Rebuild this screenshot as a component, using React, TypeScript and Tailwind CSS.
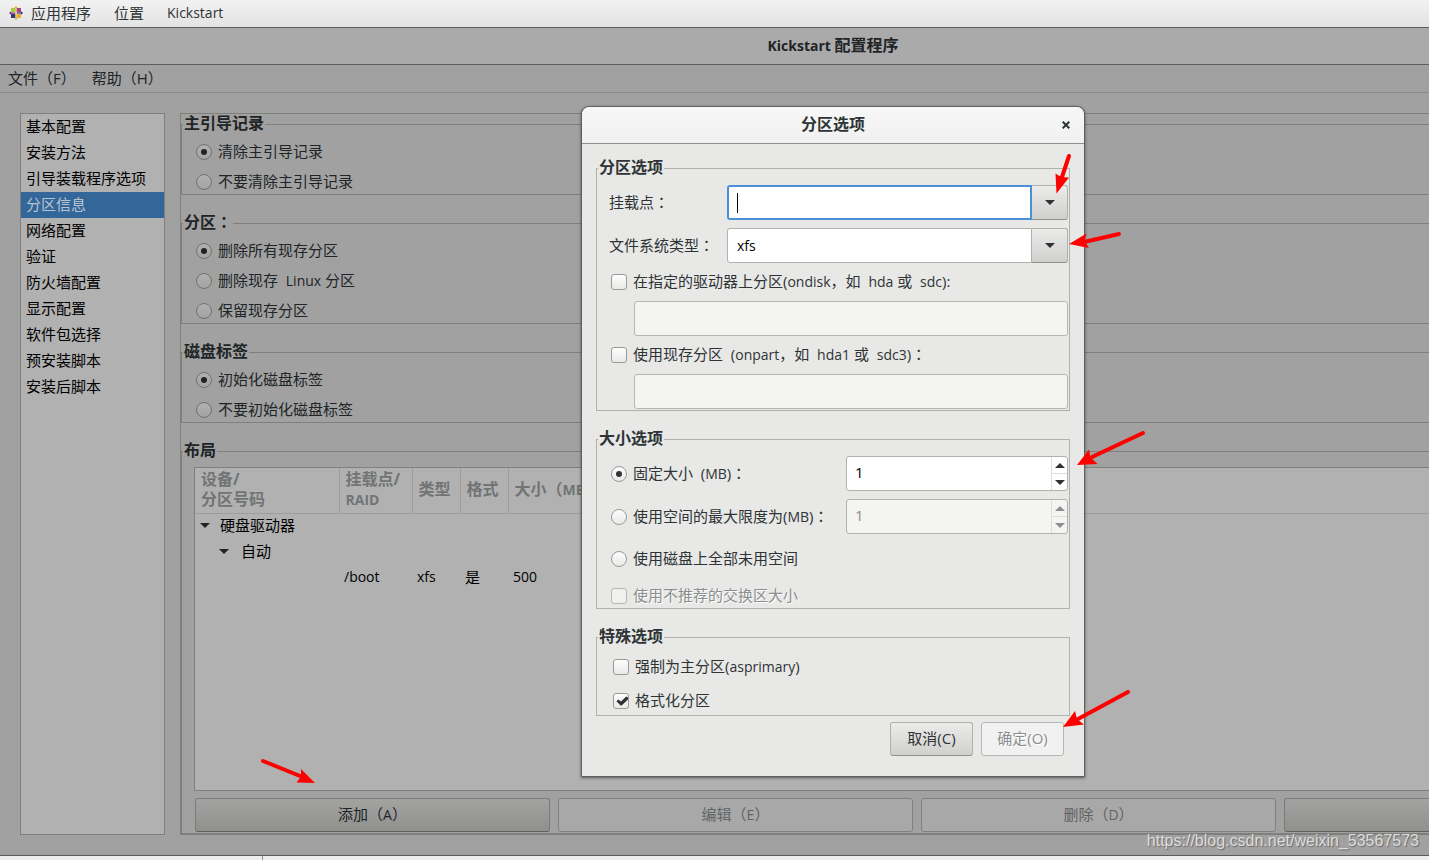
import { useState } from "react";
import type { InputHTMLAttributes, ReactNode } from "react";

const pages = [
  "基本配置",
  "安装方法",
  "引导装载程序选项",
  "分区信息",
  "网络配置",
  "验证",
  "防火墙配置",
  "显示配置",
  "软件包选择",
  "预安装脚本",
  "安装后脚本",
];

const radioGroups = [
  { name: "mbr", title: "主引导记录", options: ["清除主引导记录", "不要清除主引导记录"] },
  { name: "partitions", title: "分区：", options: ["删除所有现存分区", "删除现存  Linux 分区", "保留现存分区"] },
  { name: "disklabel", title: "磁盘标签", options: ["初始化磁盘标签", "不要初始化磁盘标签"] },
];

// latin words are set a size smaller than the Chinese, full-width colons sit in the middle of their cell
function Label({ children }: { children: string }) {
  return (
    <span className="pb-0.5 whitespace-pre">
      {children.split(/([A-Za-z0-9]+|：)/).map((part, i) => {
        if (part === "：") return <span key={i} className="font-['Noto_Sans_CJK_TC',sans-serif] leading-none">{part}</span>;
        if (/^[A-Za-z0-9]/.test(part)) return <span key={i} className="text-sm leading-none">{part}</span>;
        return part;
      })}
    </span>
  );
}

function CentosLogo() {
  return (
    <svg viewBox="0 0 16 16" className="h-4 w-4">
      <path d="M8 1 11 4.500 8 8 5 4.500z" fill="#efa724" />
      <path d="M15 8 11.500 11 8 8l3.500-3z" fill="#262577" />
      <path d="M8 15 5 11.500 8 8l3 3.500z" fill="#9ccd2a" />
      <path d="M1 8l3.500-3L8 8l-3.500 3z" fill="#932279" />
      <path d="M3 3h4.300v4.300H3z" fill="#a5cf3f" />
      <path d="M8.700 3H13v4.300H8.700z" fill="#a8408f" />
      <path d="M3 8.700h4.300V13H3z" fill="#34347f" />
      <path d="M8.700 8.700H13V13H8.700z" fill="#f0ac35" />
      <path d="M8 3v10M3 8h10" stroke="#fff" strokeWidth=".6" />
    </svg>
  );
}

function Caret({ up = false, className = "" }: { up?: boolean; className?: string }) {
  return (
    <svg viewBox="0 0 10 5" className={`h-[5px] w-[10px] ${className}`} fill="currentColor">
      <path d={up ? "M0 5 5 0l5 5z" : "M0 0h10L5 5z"} />
    </svg>
  );
}

function Radio({ dim = false, ...props }: { dim?: boolean } & InputHTMLAttributes<HTMLInputElement>) {
  return (
    <span className="relative flex h-4 w-4 shrink-0">
      <input
        type="radio"
        {...props}
        className={`peer h-4 w-4 appearance-none rounded-full border outline-none ${
          dim
            ? "border-[#71716e] bg-linear-to-b from-[#b0b0b0] to-[#a3a3a2]"
            : "border-[#9a9a96] bg-linear-to-b from-[#fdfdfd] to-[#e9e9e8]"
        }`}
      />
      <span className={`pointer-events-none absolute inset-[5px] hidden rounded-full peer-checked:block ${dim ? "bg-[#202426]" : "bg-[#2e3436]"}`} />
    </span>
  );
}

function Check(props: InputHTMLAttributes<HTMLInputElement>) {
  return (
    <span className="relative flex h-4 w-4 shrink-0">
      <input
        type="checkbox"
        {...props}
        className="peer h-4 w-4 appearance-none rounded-[3px] border border-[#9a9a96] bg-linear-to-b from-[#fdfdfd] to-[#e9e9e8] outline-none disabled:border-[#b6b6b3] disabled:from-[#f0f0ef] disabled:to-[#f0f0ef]"
      />
      <svg viewBox="0 0 16 16" className="pointer-events-none absolute inset-0 hidden peer-checked:block" fill="#2e3436">
        <path d="M3.400 8.200 5.400 6.400 8 8.600 13.200 3.400 15 4.400V6.400L8.600 12.600H7.600z" />
      </svg>
    </span>
  );
}

function Frame({ title, className, children }: { title: string; className: string; children: ReactNode }) {
  return (
    <fieldset className={`min-w-0 border ${className}`}>
      <legend className="ml-px px-px pb-0.5 text-base leading-5 font-bold"><Label>{title}</Label></legend>
      {children}
    </fieldset>
  );
}

function SpinBox({ id, disabled = false }: { id: string; disabled?: boolean }) {
  const [value, setValue] = useState(1);
  return (
    <div className={`flex h-[35px] w-[222px] shrink-0 overflow-hidden rounded-[3px] border border-[#b0b0ac] ${disabled ? "bg-[#f4f4f2] text-[#8b8e8f]" : "bg-white text-black"}`}>
      <input
        id={id}
        value={value}
        disabled={disabled}
        onChange={(e) => setValue(Number(e.target.value) || 0)}
        className="min-w-0 flex-1 bg-transparent px-2 pb-1 outline-none"
      />
      <div className={`flex w-4 flex-col divide-y divide-[#dededc] border-l border-[#dededc] ${disabled ? "text-[#8b8e8f]" : "text-[#2e3436]"}`}>
        <button type="button" aria-label="+" disabled={disabled} onClick={() => setValue(value + 1)} className="flex flex-1 items-center justify-center">
          <Caret up className="w-2" />
        </button>
        <button type="button" aria-label="-" disabled={disabled} onClick={() => setValue(value - 1)} className="flex flex-1 items-center justify-center">
          <Caret className="w-2" />
        </button>
      </div>
    </div>
  );
}

function Combo({ id, label, value, focused = false }: { id: string; label: string; value: string; focused?: boolean }) {
  return (
    <div className="flex items-center pl-3">
      <label htmlFor={id} className="flex w-[118px] shrink-0"><Label>{label}</Label></label>
      <div className="flex h-[35px] flex-1">
        <div className={`flex min-w-0 flex-1 items-center rounded-l-[3px] bg-white ${focused ? "border-2 border-[#4a90d9] px-2" : "border border-[#b0b0ac] px-[9px]"}`}>
          {focused && <span className="h-5 w-px bg-black" />}
          <input id={id} defaultValue={value} className="min-w-0 flex-1 bg-transparent text-sm text-black outline-none" />
        </div>
        <button type="button" aria-label={label} className="flex w-9 items-center justify-center rounded-r-[3px] border border-l-0 border-[#b0b0ac] border-b-[#8f8f8b] bg-linear-to-b from-[#ebebea] to-[#d0d0ce]">
          <Caret />
        </button>
      </div>
    </div>
  );
}

function PartitionDialog() {
  return (
    <div role="dialog" aria-label="分区选项" className="w-[504px] rounded-t-lg border border-[#5e5e5e] bg-[#e8e8e6] pb-5 text-[#2e3436] shadow-[0_1px_3px_rgba(0,0,0,0.5)]">
      <div className="grid h-[37px] grid-cols-[1fr_auto_1fr] items-center rounded-t-lg border-b border-[#8f8f8b] bg-linear-to-b from-[#f7f7f7] to-[#f1f1f1] px-3">
        <h2 className="col-start-2 pb-0.5 text-base leading-5 font-bold">分区选项</h2>
        <button type="button" aria-label="关闭" className="justify-self-end p-[2px]">
          <svg viewBox="0 0 8 8" className="h-2 w-2" stroke="#2e3436" strokeWidth="2">
            <path d="m.7.7 6.6 6.6M7.3.7.7 7.3" />
          </svg>
        </button>
      </div>

      <form className="flex flex-col gap-[17px] px-[14px] pt-[13px]">
        <Frame title="分区选项" className="border-[#b0b0ae]">
          <div className="flex flex-col gap-2 pt-[6px] pr-px pb-px">
            <Combo id="mount" label="挂载点：" value="" focused />
            <Combo id="fstype" label="文件系统类型：" value="xfs" />
            <label className="flex h-[22px] items-center gap-[6px] pl-[14px]">
              <Check /><Label>在指定的驱动器上分区(ondisk，如  hda 或  sdc):</Label>
            </label>
            <input aria-label="ondisk" disabled className="ml-[37px] h-[35px] rounded-[3px] border border-[#b6b6b3] bg-[#f4f4f2]" />
            <label className="flex h-[22px] items-center gap-[6px] pl-[14px]">
              <Check /><Label>使用现存分区  (onpart，如  hda1 或  sdc3)：</Label>
            </label>
            <input aria-label="onpart" disabled className="ml-[37px] h-[35px] rounded-[3px] border border-[#b6b6b3] bg-[#f4f4f2]" />
          </div>
        </Frame>

        <Frame title="大小选项" className="border-[#b0b0ae]">
          <div className="flex flex-col gap-2 pt-[6px] pr-px pl-[14px]">
            <div className="flex items-center justify-between">
              <label className="flex items-center gap-[6px]">
                <Radio name="size" defaultChecked /><Label>固定大小  (MB)：</Label>
              </label>
              <SpinBox id="fixed" />
            </div>
            <div className="flex items-center justify-between">
              <label className="flex items-center gap-[6px]">
                <Radio name="size" /><Label>使用空间的最大限度为(MB)：</Label>
              </label>
              <SpinBox id="max" disabled />
            </div>
            <label className="flex h-[34px] items-center gap-[6px]"><Radio name="size" /><Label>使用磁盘上全部未用空间</Label></label>
            <label className="flex h-6 items-center gap-[6px] text-[#8b8e8f] text-shadow-[1px_1px_0_#fff]"><Check disabled /><Label>使用不推荐的交换区大小</Label></label>
          </div>
        </Frame>

        <Frame title="特殊选项" className="border-[#b0b0ae]">
          <div className="flex flex-col gap-3 pt-2 pb-[3px] pl-4">
            <label className="flex h-[22px] items-center gap-[6px]"><Check /><Label>强制为主分区(asprimary)</Label></label>
            <label className="flex h-[22px] items-center gap-[6px]"><Check defaultChecked /><Label>格式化分区</Label></label>
          </div>
        </Frame>
      </form>

      <div className="flex justify-end gap-2 pt-[6px] pr-5">
        <button type="button" className="h-[34px] w-[83px] rounded-[3px] border border-[#b0b0ac] border-b-[#8f8f8b] bg-linear-to-b from-[#ebebea] to-[#d0d0ce] pb-0.5">取消(C)</button>
        <button type="button" disabled className="h-[34px] w-[83px] rounded-[3px] border border-[#b6b6b3] bg-[#f1f1f1] pb-0.5 text-[#8b8e8f] text-shadow-[1px_1px_0_#fff]">确定(O)</button>
      </div>
    </div>
  );
}

function LayoutTable() {
  return (
    <div className="min-h-0 flex-1 overflow-hidden border border-[#7f7f7d] bg-[#b1b1b1] text-black">
      <table className="w-full table-fixed border-collapse text-left">
        <thead>
          <tr className="h-[45px] text-base leading-5 text-[#717474] [&>th]:border-r [&>th]:border-b [&>th]:border-[#9d9d9d] [&>th]:p-0 [&>th]:pb-0.5 [&>th]:pl-[6px] [&>th]:whitespace-nowrap">
            <th className="w-[144px]">设备/<br />分区号码</th>
            <th className="w-[73px]">挂载点/<br /><span className="text-sm leading-none">RAID</span></th>
            <th className="w-12">类型</th>
            <th className="w-12">格式</th>
            <th>大小（<span className="text-sm leading-none">MB</span>）</th>
          </tr>
        </thead>
        <tbody className="[&>tr]:h-[26px] [&_td]:p-0 [&_td]:pb-0.5 [&_td]:pl-[5px]">
          <tr>
            <td><span className="flex items-center gap-[10px]"><Caret className="w-[9px] text-[#202426]" />硬盘驱动器</span></td>
          </tr>
          <tr>
            <td><span className="flex items-center gap-3 pl-[19px]"><Caret className="w-[9px] text-[#202426]" />自动</span></td>
          </tr>
          <tr>
            <td />
            <td className="text-sm">/boot</td>
            <td className="text-sm">xfs</td>
            <td>是</td>
            <td className="text-sm">500</td>
          </tr>
        </tbody>
      </table>
    </div>
  );
}

const activeButton = "h-[34px] rounded-[3px] border border-[#7a7a78] border-b-[#5f5f5c] bg-linear-to-b from-[#a3a3a2] to-[#90908d] pb-0.5";
const idleButton = "h-[34px] rounded-[3px] border border-[#7f7f7d] bg-[#a8a8a8] pb-0.5 text-[#616465]";

function Arrow({ className, viewBox, shaft, head }: { className: string; viewBox: string; shaft: string; head: string }) {
  return (
    <svg viewBox={viewBox} className={`pointer-events-none absolute ${className}`}>
      <path d={shaft} stroke="#f00" strokeWidth="4" strokeLinecap="round" />
      <path d={head} fill="#f00" />
    </svg>
  );
}

export default function App() {
  const [page, setPage] = useState("分区信息");

  return (
    <div className="relative flex h-screen min-h-[700px] flex-col overflow-hidden bg-[#eeeeee] font-['Open_Sans','Noto_Sans_CJK_SC',sans-serif] text-[15px] leading-5 text-[#202426]">
      <header className="flex h-7 shrink-0 items-center gap-[23px] border-b border-[#5c5c5c] bg-linear-to-b from-[#f2f2f2] to-[#e3e3e3] px-2 pb-0.5 text-[#2e3436]">
        <button type="button" className="flex items-center gap-[7px]"><CentosLogo />应用程序</button>
        <button type="button">位置</button>
        <button type="button" className="text-sm">Kickstart</button>
      </header>

      {/* the window is wider than the visible desktop */}
      <div className="relative flex min-h-0 w-[calc(100%+237px)] flex-1 flex-col border-b border-[#5c5c5c] bg-[#a1a1a1]">
        <h1 className="flex h-[37px] shrink-0 items-center justify-center border-b border-[#5f5f5d] bg-[#aaaaaa] text-sm font-bold">
          <span className="whitespace-pre">Kickstart <span className="text-base leading-none">配置程序</span></span>
        </h1>
        <div className="flex h-7 shrink-0 items-center gap-4 border-b border-[#8b8b8b] px-2 pb-0.5">
          <button type="button">文件（F）</button>
          <button type="button">帮助（H）</button>
        </div>

        <div className="flex min-h-0 flex-1 gap-[15px] p-5 pr-[22px]">
          <nav className="w-[145px] shrink-0 border border-[#7f7f7d] bg-[#b1b1b1] text-black">
            {pages.map((name) => (
              <button
                key={name}
                type="button"
                onClick={() => setPage(name)}
                className={`block h-[26px] w-full pb-0.5 pl-[5px] text-left ${page === name ? "bg-[#336699] text-[#b8c4d0]" : ""}`}
              >
                {name}
              </button>
            ))}
          </nav>

          <main className="flex min-w-0 flex-1 flex-col gap-[17px] border border-t-0 border-[#7f7f7d] bg-[linear-gradient(#7f7f7d,#7f7f7d)] bg-[length:100%_1px] bg-no-repeat">
            {radioGroups.map((group) => (
              <Frame key={group.name} title={group.title} className="border-r-0 border-[#7f7f7d]">
                <div className="flex flex-col gap-[6px] pt-[5px] pl-[14px]">
                  {group.options.map((option, i) => (
                    <label key={option} className="flex h-6 items-center gap-[6px]">
                      <Radio dim name={group.name} defaultChecked={i === 0} />
                      <Label>{option}</Label>
                    </label>
                  ))}
                </div>
              </Frame>
            ))}
            <Frame title="布局" className="min-h-0 flex-1 border-r-0 border-[#7f7f7d]">
              <div className="flex h-full flex-col gap-[7px] pt-[5px] pr-1 pb-px pl-3">
                <LayoutTable />
                <div className="grid grid-cols-4 gap-2 pl-px">
                  <button type="button" className={activeButton}><Label>添加（A）</Label></button>
                  <button type="button" disabled className={idleButton}><Label>编辑（E）</Label></button>
                  <button type="button" disabled className={idleButton}><Label>删除（D）</Label></button>
                  <button type="button" aria-label="RAID" className={activeButton} />
                </div>
              </div>
            </Frame>
          </main>
        </div>

        <div className="absolute inset-x-0 top-[78px] flex justify-center">
          <PartitionDialog />
        </div>
      </div>
      <footer className="h-1 w-[263px] shrink-0 border-r border-[#8b8b8b]" />

      <Arrow className="top-[150px] left-[1050px] h-12 w-7" viewBox="0 0 28 48" shaft="M19 6 11 30" head="M6.500 43.500 5.500 23.500 11 27 19 27.500z" />
      <Arrow className="top-[228px] left-[1064px] h-6 w-[60px]" viewBox="0 0 60 24" shaft="M55 6 20 14" head="M5 16 22.500 5.500 20.500 13 25 20z" />
      <Arrow className="top-[428px] left-[1070px] h-11 w-20" viewBox="0 0 80 44" shaft="M73 5 22 29" head="M7 37 19 21.500 20.500 29.500 27.500 36z" />
      <Arrow className="top-[686px] left-[1058px] h-11 w-20" viewBox="0 0 80 44" shaft="M70 6 20 33" head="M5 41 17 25 19 33 26 38.500z" />
      <Arrow className="top-[756px] left-[258px] h-8 w-[60px]" viewBox="0 0 60 32" shaft="M5 5 42 20" head="M57 27 38.500 26.500 43 20.500 43 13z" />

      <span className="absolute right-[10px] bottom-[7px] font-['Liberation_Sans',sans-serif] text-base text-[#dcdcdc] text-shadow-[1px_1px_1px_rgba(0,0,0,0.35)]">
        https://blog.csdn.net/weixin_53567573
      </span>
    </div>
  );
}
